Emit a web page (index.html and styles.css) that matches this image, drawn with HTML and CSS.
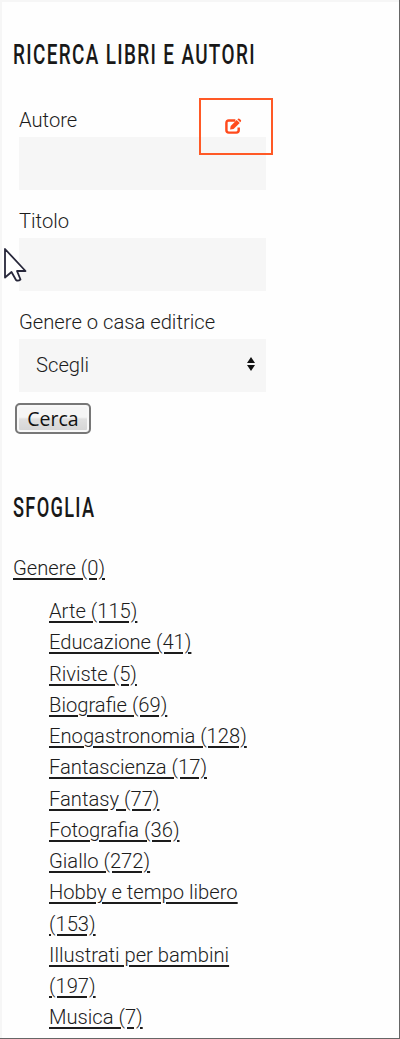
FILE: index.html
```html
<!DOCTYPE html>
<html lang="it">
<head>
<meta charset="utf-8">
<title>Ricerca libri e autori</title>
<link rel="stylesheet" href="styles.css">
</head>
<body>
<main class="sidebar">
  <h2 class="heading"><span class="condensed">RICERCA LIBRI E AUTORI</span></h2>
  <form class="search">
    <div class="field">
      <label class="label" for="autore">Autore</label>
      <input class="control" id="autore" type="text">
      <span class="edit">
        <svg width="17" height="17" viewBox="0 0 18 17" fill="none" stroke="#ff4a1c">
          <path d="M11 2.2H4Q1.5 2.2 1.5 4.7V12.6Q1.5 15 4 15H12Q14.5 15 14.5 12.6V9.5" stroke-width="2.6"/>
          <path d="M5.4 11.8L6 8.1L12.4 1.6L15.6 4.8L9.1 11.2Z" fill="#ff4a1c" stroke="none"/>
          <path d="M13.1 .9L13.9 .3Q14.8 -.2 15.6 .5L16.8 1.7Q17.5 2.5 16.8 3.3L16.1 4Z" fill="#ff4a1c" stroke="none"/>
        </svg>
      </span>
    </div>
    <div class="field">
      <label class="label" for="titolo">Titolo</label>
      <input class="control" id="titolo" type="text">
      <svg class="cursor" width="24" height="38" viewBox="0 0 24 38">
        <path d="M2 2V30.5L8.5 25L13 33Q15 34.5 17.5 32.5L14 24H22.5Z" fill="#fff" stroke="#27273a" stroke-width="1.8" stroke-linejoin="round"/>
      </svg>
    </div>
    <div class="field">
      <span class="label">Genere o casa editrice</span>
      <div class="control select"><span>Scegli</span>
        <svg class="arrows" width="8" height="14" viewBox="0 0 8 14" fill="#111"><path d="M4 0L8 6H0ZM0 8H8L4 14Z"/></svg>
      </div>
    </div>
    <button class="submit" type="button">Cerca</button>
  </form>
  <h2 class="heading browse"><span class="condensed narrow">SFOGLIA</span></h2>
  <a class="link root">Genere (0)</a>
  <ul class="genres">
    <li><a class="link">Arte (115)</a></li>
    <li><a class="link">Educazione (41)</a></li>
    <li><a class="link">Riviste (5)</a></li>
    <li><a class="link">Biografie (69)</a></li>
    <li><a class="link">Enogastronomia (128)</a></li>
    <li><a class="link">Fantascienza (17)</a></li>
    <li><a class="link">Fantasy (77)</a></li>
    <li><a class="link">Fotografia (36)</a></li>
    <li><a class="link">Giallo (272)</a></li>
    <li><a class="link">Hobby e tempo libero (153)</a></li>
    <li><a class="link">Illustrati per bambini (197)</a></li>
    <li><a class="link">Musica (7)</a></li>
  </ul>
</main>
</body>
</html>
```
FILE: styles.css
```css
* { box-sizing: border-box; }
body { margin: 0; background: #fefefe; }
.sidebar {
  height: 1039px;
  padding: 35px 0 0 13px;
  overflow: hidden;
  border: solid #666;
  border-width: 0 1px 1px 0;
  box-shadow: inset 2px 2px #f6f6f6;
  font: 300 20.2px/31.23px Roboto, "Liberation Sans", sans-serif;
  color: #1c1c1c;
}
.heading {
  height: 40px;
  margin: 0;
  font-size: 28px;
  line-height: 40px;
  font-weight: 500;
  letter-spacing: 2px;
  color: #181818;
  white-space: nowrap;
}
.condensed { display: inline-block; transform: scaleX(.676); transform-origin: left; }
.narrow { transform: scaleX(.65); }
.search { padding: 30px 0 0 6px; }
.field { position: relative; width: 247px; height: 101px; }
.label { display: block; height: 32px; line-height: 31px; }
.control { display: block; width: 247px; height: 53px; border: 0; background: #f6f6f6; }
.select { display: flex; align-items: center; justify-content: space-between; padding: 0 11px 0 17px; }
.arrows { margin-bottom: 4px; }
.edit {
  position: absolute;
  left: 180px;
  top: -7px;
  width: 74px;
  height: 57px;
  padding: 18px 0 0 24px;
  border: 2px solid #ff5926;
  line-height: 0;
}
.cursor { position: absolute; left: -16px; top: 41px; }
.submit {
  display: block;
  width: 76px;
  height: 31px;
  margin: -5px 0 0 -4px;
  padding: 0;
  border: 2px solid #777;
  border-radius: 5px;
  background: linear-gradient(#f5f5f5 45%, #e0e0e0 52%, #d4d4d4);
  box-shadow: inset 0 0 0 2px #f8f8f8;
  font: 400 19.5px/27px "Open Sans", sans-serif;
  color: #111;
}
.browse { margin-top: 54px; }
.link { text-decoration: underline; text-decoration-thickness: 1.5px; text-underline-offset: 3px; }
.root { display: block; margin-top: 25px; }
.genres { width: 240px; margin: 12px 0 0; padding: 0 0 0 36px; list-style: none; }
```
